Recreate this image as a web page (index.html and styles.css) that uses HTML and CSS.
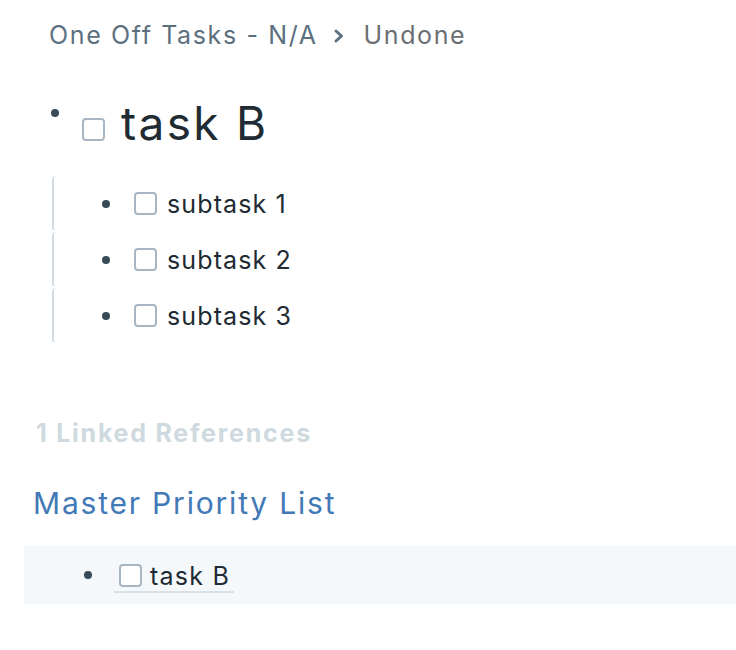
FILE: index.html
```html
<!DOCTYPE html>
<html>
<head>
<meta charset="utf-8">
<link rel="stylesheet" href="styles.css">
</head>
<body>
<div class="page">
  <div class="crumbs">
    <span class="crumb">One Off Tasks - N/A</span>
    <svg class="chev" width="14" height="16" viewBox="0 0 14 16"><path d="M4 3 L9.5 8 L4 13" fill="none" stroke="#5c7080" stroke-width="3" stroke-linecap="round" stroke-linejoin="round"/></svg>
    <span class="crumb last">Undone</span>
  </div>

  <div class="title-row">
    <span class="title-bullet"></span>
    <span class="cb title-cb"></span>
    <h1 class="title">task B</h1>
  </div>

  <div class="children">
    <div class="child"><span class="bullet"></span><span class="cb"></span><span class="ctext">subtask 1</span></div>
    <div class="child"><span class="bullet"></span><span class="cb"></span><span class="ctext">subtask 2</span></div>
    <div class="child"><span class="bullet"></span><span class="cb"></span><span class="ctext">subtask 3</span></div>
  </div>

  <div class="refs-head">1 Linked References</div>
  <div class="ref-page">Master Priority List</div>
  <div class="ref-band">
    <span class="bullet ref-bullet"></span>
    <span class="ref-item"><span class="cb ref-cb"></span><span class="rtext">task B</span></span>
  </div>
</div>
</body>
</html>
```

FILE: styles.css
```css
html, body {
  margin: 0;
  padding: 0;
  background: #ffffff;
}
body {
  font-family: Inter, "Noto Sans", sans-serif;
  color: #202b33;
}
.page {
  width: 736px;
  height: 650px;
  overflow: hidden;
}
.crumbs {
  display: flex;
  align-items: center;
  padding: 19px 0 0 49px;
  height: 32px;
  font-size: 25px;
  letter-spacing: 0.065em;
  color: #5c7080;
}
.chev {
  margin: 2px 18px 0 14px;
}
.crumb.last {
  color: #6b6f73;
}
.title-row {
  display: flex;
  align-items: flex-start;
  padding: 40px 0 0 51px;
  height: 70px;
}
.title-bullet {
  width: 8px;
  height: 8px;
  border-radius: 50%;
  background: #394b59;
  margin-top: 18px;
  flex: none;
}
.cb {
  display: inline-block;
  box-sizing: border-box;
  width: 23px;
  height: 23px;
  border: 2px solid #a7b6c2;
  border-radius: 4px;
  background: #fff;
  flex: none;
}
.title-cb {
  margin: 27px 0 0 23px;
}
.title {
  margin: 4px 0 0 16px;
  font-size: 46px;
  font-weight: 400;
  line-height: 56px;
  letter-spacing: 0.05em;
  color: #202b33;
}
.children {
  margin: 15px 0 0 52px;
}
.child {
  display: flex;
  align-items: center;
  height: 55px;
  border-left: 2px solid #d3dce3;
  border-radius: 4px 0 0 4px;
  margin-bottom: 1px;
  font-size: 25px;
  letter-spacing: 0.045em;
}
.bullet {
  width: 8px;
  height: 8px;
  border-radius: 50%;
  background: #394b59;
  flex: none;
}
.child .bullet {
  margin-left: 48px;
}
.child .cb {
  margin-left: 24px;
}
.ctext {
  margin-left: 10px;
}
.refs-head {
  margin: 75px 0 0 36px;
  font-size: 25px;
  font-weight: 700;
  color: #ced9e0;
  line-height: 30px;
  letter-spacing: 0.07em;
}
.ref-page {
  margin: 37px 0 0 33px;
  font-size: 30px;
  color: #4279b6;
  line-height: 36px;
  letter-spacing: 0.06em;
}
.ref-band {
  display: flex;
  align-items: center;
  margin: 25px 0 0 24px;
  height: 58px;
  background: #f5f8fa;
}
.ref-bullet {
  margin-left: 60px;
}
.ref-item {
  display: flex;
  align-items: center;
  margin-left: 22px;
  padding: 0 4px 1px 5px;
  border-bottom: 2px solid #d8e1e8;
  margin-top: 4px;
  font-size: 25px;
  line-height: 28px;
}
.ref-cb {
  margin-right: 8px;
}
.rtext {
  letter-spacing: 0.05em;
}
```
